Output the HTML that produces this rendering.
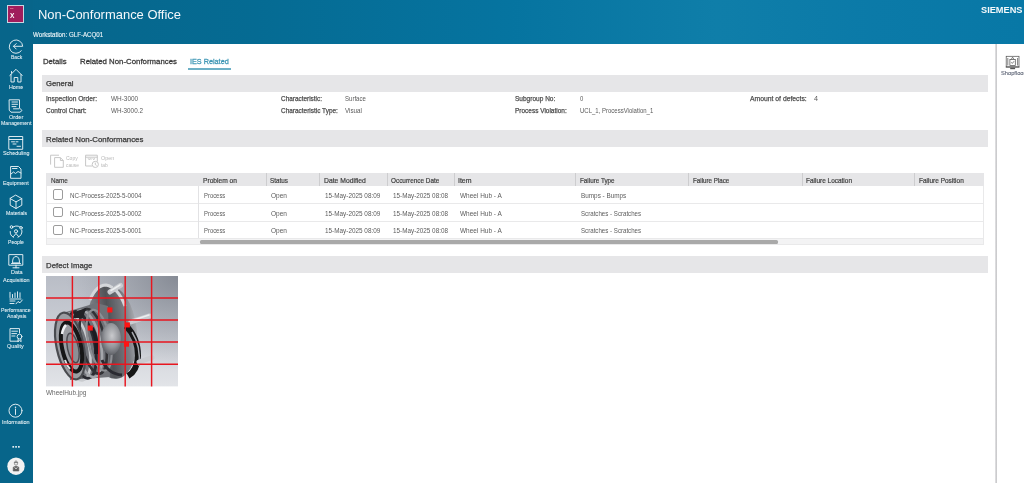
<!DOCTYPE html><html><head><meta charset="utf-8"><style>
html,body{margin:0;padding:0;width:1024px;height:483px;overflow:hidden;background:#fff}
body{position:relative;font-family:"Liberation Sans", sans-serif}
#wrap{position:absolute;left:0;top:0;width:1024px;height:483px;overflow:hidden;filter:blur(0.3px)}
.t{position:absolute;white-space:nowrap}
.r{position:absolute}
svg{position:absolute;overflow:visible}
</style></head><body>
<div id="wrap">
<div class="r" style="left:0px;top:0px;width:1024px;height:43.6px;background:linear-gradient(90deg,#07658a 0%,#056b93 25%,#0674a0 50%,#0f7ea9 70%,#0b7aa8 85%,#0878a6 100%);"></div>
<div class="r" style="left:0px;top:0px;width:33px;height:483px;background:#07658a;"></div>
<div class="r" style="left:33px;top:43.6px;width:991px;height:440px;background:#ffffff;"></div>
<div class="r" style="left:7.1px;top:5.1px;width:17.3px;height:17.5px;background:#a01d5c;border:0.7px solid #c9d6e0;box-sizing:border-box"></div>
<div id="t0" class="t" style="left:9.5px;top:12.00px;font-size:7.8px;line-height:7.8px;color:#fff;font-weight:700;transform:scaleX(0.8456);transform-origin:0 0;">X</div>
<div id="t1" class="t" style="left:9.5px;top:8.17px;font-size:2.4px;line-height:2.4px;color:#f0a0a8;font-weight:700;transform:scaleX(1.0715);transform-origin:0 0;">NC</div>
<div id="t2" class="t" style="left:38px;top:8.41px;font-size:13.1px;line-height:13.1px;color:#f4f8fb;font-weight:400;transform:scaleX(0.9890);transform-origin:0 0;">Non-Conformance Office</div>
<div id="t3" class="t" style="left:33.3px;top:32.01px;font-size:6.6px;line-height:6.6px;color:#eef5f8;font-weight:400;-webkit-text-stroke:0.12px #eef5f8;transform:scaleX(0.9360);transform-origin:0 0;">Workstation: GLF-ACQ01</div>
<div id="t4" class="t" style="left:981.4px;top:5.62px;font-size:8.6px;line-height:8.6px;color:#f5f9fb;font-weight:700;transform:scaleX(1.0727);transform-origin:0 0;">SIEMENS</div>
<div class="r" style="left:994.9px;top:43.6px;width:2.4px;height:440px;background:linear-gradient(90deg,#e6e6e8,#c9c9cb 70%,#d8d8da);"></div>
<div id="t5" class="t" style="left:42.9px;top:57.94px;font-size:8.1px;line-height:8.1px;color:#3c3c3c;font-weight:400;-webkit-text-stroke:0.3px #3c3c3c;transform:scaleX(0.9535);transform-origin:0 0;">Details</div>
<div id="t6" class="t" style="left:79.8px;top:57.94px;font-size:8.1px;line-height:8.1px;color:#3c3c3c;font-weight:400;-webkit-text-stroke:0.3px #3c3c3c;transform:scaleX(0.9658);transform-origin:0 0;">Related Non-Conformances</div>
<div id="t7" class="t" style="left:190px;top:57.94px;font-size:8.1px;line-height:8.1px;color:#3f97b5;font-weight:400;-webkit-text-stroke:0.3px #3f97b5;transform:scaleX(0.8958);transform-origin:0 0;">IES Related</div>
<div class="r" style="left:188.3px;top:68.4px;width:42.6px;height:1.7px;background:#6cb0c6;"></div>
<div class="r" style="left:41.8px;top:75px;width:946.2px;height:16.799999999999997px;background:#e6e6e8;"></div>
<div id="t8" class="t" style="left:46.1px;top:79.77px;font-size:7.6px;line-height:7.6px;color:#383838;font-weight:400;-webkit-text-stroke:0.25px #383838;transform:scaleX(1.0136);transform-origin:0 0;">General</div>
<div class="r" style="left:41.8px;top:130px;width:946.2px;height:17.19999999999999px;background:#e6e6e8;"></div>
<div id="t9" class="t" style="left:46.1px;top:135.87px;font-size:7.6px;line-height:7.6px;color:#383838;font-weight:400;-webkit-text-stroke:0.25px #383838;transform:scaleX(1.0348);transform-origin:0 0;">Related Non-Conformances</div>
<div class="r" style="left:41.8px;top:256.3px;width:946.2px;height:17.19999999999999px;background:#e6e6e8;"></div>
<div id="t10" class="t" style="left:46.1px;top:262.07px;font-size:7.6px;line-height:7.6px;color:#383838;font-weight:400;-webkit-text-stroke:0.25px #383838;transform:scaleX(1.0272);transform-origin:0 0;">Defect Image</div>
<div id="t11" class="t" style="left:46.25px;top:94.87px;font-size:7.0px;line-height:7.0px;color:#4d4d4d;font-weight:400;-webkit-text-stroke:0.25px #4d4d4d;transform:scaleX(0.9506);transform-origin:0 0;">Inspection Order:</div>
<div id="t12" class="t" style="left:110.8px;top:94.87px;font-size:7.0px;line-height:7.0px;color:#5a5a5a;font-weight:400;transform:scaleX(0.9196);transform-origin:0 0;">WH-3000</div>
<div id="t13" class="t" style="left:46.25px;top:107.37px;font-size:7.0px;line-height:7.0px;color:#4d4d4d;font-weight:400;-webkit-text-stroke:0.25px #4d4d4d;transform:scaleX(0.9328);transform-origin:0 0;">Control Chart:</div>
<div id="t14" class="t" style="left:110.8px;top:107.37px;font-size:7.0px;line-height:7.0px;color:#5a5a5a;font-weight:400;transform:scaleX(0.9010);transform-origin:0 0;">WH-3000.2</div>
<div id="t15" class="t" style="left:280.6px;top:94.87px;font-size:7.0px;line-height:7.0px;color:#4d4d4d;font-weight:400;-webkit-text-stroke:0.25px #4d4d4d;transform:scaleX(0.9165);transform-origin:0 0;">Characteristic:</div>
<div id="t16" class="t" style="left:345px;top:94.87px;font-size:7.0px;line-height:7.0px;color:#5a5a5a;font-weight:400;transform:scaleX(0.8622);transform-origin:0 0;">Surface</div>
<div id="t17" class="t" style="left:280.6px;top:107.37px;font-size:7.0px;line-height:7.0px;color:#4d4d4d;font-weight:400;-webkit-text-stroke:0.25px #4d4d4d;transform:scaleX(0.9217);transform-origin:0 0;">Characteristic Type:</div>
<div id="t18" class="t" style="left:345px;top:107.37px;font-size:7.0px;line-height:7.0px;color:#5a5a5a;font-weight:400;transform:scaleX(0.8917);transform-origin:0 0;">Visual</div>
<div id="t19" class="t" style="left:515.2px;top:94.87px;font-size:7.0px;line-height:7.0px;color:#4d4d4d;font-weight:400;-webkit-text-stroke:0.25px #4d4d4d;transform:scaleX(0.9328);transform-origin:0 0;">Subgroup No:</div>
<div id="t20" class="t" style="left:579.7px;top:94.87px;font-size:7.0px;line-height:7.0px;color:#5a5a5a;font-weight:400;transform:scaleX(0.8448);transform-origin:0 0;">0</div>
<div id="t21" class="t" style="left:515.2px;top:107.37px;font-size:7.0px;line-height:7.0px;color:#4d4d4d;font-weight:400;-webkit-text-stroke:0.25px #4d4d4d;transform:scaleX(0.9248);transform-origin:0 0;">Process Violation:</div>
<div id="t22" class="t" style="left:579.7px;top:107.37px;font-size:7.0px;line-height:7.0px;color:#5a5a5a;font-weight:400;transform:scaleX(0.8575);transform-origin:0 0;">UCL_1, ProcessViolation_1</div>
<div id="t23" class="t" style="left:749.7px;top:94.87px;font-size:7.0px;line-height:7.0px;color:#4d4d4d;font-weight:400;-webkit-text-stroke:0.25px #4d4d4d;transform:scaleX(0.9713);transform-origin:0 0;">Amount of defects:</div>
<div id="t24" class="t" style="left:814px;top:94.87px;font-size:7.0px;line-height:7.0px;color:#5a5a5a;font-weight:400;transform:scaleX(1.0240);transform-origin:0 0;">4</div>
<svg style="left:0;top:0" width="1024" height="483" viewBox="0 0 1024 483">
<g fill="none" stroke="#c4c4c4" stroke-width="0.95" stroke-linejoin="round">
 <path d="M50.6 164.6 V155.2 H59"/>
 <path d="M54.6 157.6 H60.4 L63.3 160.5 V167.3 H54.6 Z"/>
 <path d="M60.4 157.6 V160.5 H63.3"/>
 <path d="M85.6 155.2 H97.3 V161.5 M92 166 H85.6 V155.2"/>
 <path d="M85.6 157.2 H97.3"/>
 <path d="M88 158.2 l1.2 1.6 l1 -1.6 M91 158.2 v1.6 M92.8 158.2 l1 1.6 l1 -1.6"/>
 <circle cx="95.3" cy="164.4" r="3.1"/>
 <path d="M95.3 162.6 V164.6 L96.6 165.4"/>
</g></svg>
<div id="t25" class="t" style="left:65.5px;top:156.41px;font-size:5.3px;line-height:5.3px;color:#b8b8b8;font-weight:400;transform:scaleX(0.9455);transform-origin:0 0;">Copy</div>
<div id="t26" class="t" style="left:65.7px;top:163.31px;font-size:5.3px;line-height:5.3px;color:#b8b8b8;font-weight:400;transform:scaleX(0.9123);transform-origin:0 0;">cause</div>
<div id="t27" class="t" style="left:100.9px;top:156.41px;font-size:5.3px;line-height:5.3px;color:#b8b8b8;font-weight:400;transform:scaleX(1.0178);transform-origin:0 0;">Open</div>
<div id="t28" class="t" style="left:101.25px;top:163.31px;font-size:5.3px;line-height:5.3px;color:#b8b8b8;font-weight:400;transform:scaleX(0.9288);transform-origin:0 0;">tab</div>
<div class="r" style="left:46.3px;top:173px;width:937.7px;height:13px;background:#e6e6e8;"></div>
<div class="r" style="left:46.3px;top:186px;width:937.7px;height:59.2px;background:#fff;border:0.8px solid #e9e9ea;border-top:none;box-sizing:border-box"></div>
<div class="r" style="left:47.099999999999994px;top:238.4px;width:936.1px;height:6px;background:#f3f3f4;"></div>
<div class="r" style="left:46.3px;top:203.3px;width:937.7px;height:0.8px;background:#e9e9ea;"></div>
<div class="r" style="left:46.3px;top:220.9px;width:937.7px;height:0.8px;background:#e9e9ea;"></div>
<div class="r" style="left:46.3px;top:238.0px;width:937.7px;height:0.8px;background:#e9e9ea;"></div>
<div class="r" style="left:265.7px;top:173px;width:0.8px;height:13px;background:#cdcdcf;"></div>
<div class="r" style="left:318.5px;top:173px;width:0.8px;height:13px;background:#cdcdcf;"></div>
<div class="r" style="left:386.8px;top:173px;width:0.8px;height:13px;background:#cdcdcf;"></div>
<div class="r" style="left:453.9px;top:173px;width:0.8px;height:13px;background:#cdcdcf;"></div>
<div class="r" style="left:574.9px;top:173px;width:0.8px;height:13px;background:#cdcdcf;"></div>
<div class="r" style="left:688.2px;top:173px;width:0.8px;height:13px;background:#cdcdcf;"></div>
<div class="r" style="left:801.6px;top:173px;width:0.8px;height:13px;background:#cdcdcf;"></div>
<div class="r" style="left:914.4px;top:173px;width:0.8px;height:13px;background:#cdcdcf;"></div>
<div class="r" style="left:197.7px;top:186px;width:0.9px;height:52px;background:#e2e2e4;"></div>
<div id="t29" class="t" style="left:51.2px;top:177.27px;font-size:7.0px;line-height:7.0px;color:#3e3e3e;font-weight:400;-webkit-text-stroke:0.2px #3e3e3e;transform:scaleX(0.9043);transform-origin:0 0;">Name</div>
<div id="t30" class="t" style="left:202.9px;top:177.27px;font-size:7.0px;line-height:7.0px;color:#3e3e3e;font-weight:400;-webkit-text-stroke:0.2px #3e3e3e;transform:scaleX(0.9498);transform-origin:0 0;">Problem on</div>
<div id="t31" class="t" style="left:270.3px;top:177.27px;font-size:7.0px;line-height:7.0px;color:#3e3e3e;font-weight:400;-webkit-text-stroke:0.2px #3e3e3e;transform:scaleX(0.9013);transform-origin:0 0;">Status</div>
<div id="t32" class="t" style="left:324.1px;top:177.27px;font-size:7.0px;line-height:7.0px;color:#3e3e3e;font-weight:400;-webkit-text-stroke:0.2px #3e3e3e;transform:scaleX(0.9698);transform-origin:0 0;">Date Modified</div>
<div id="t33" class="t" style="left:391.2px;top:177.27px;font-size:7.0px;line-height:7.0px;color:#3e3e3e;font-weight:400;-webkit-text-stroke:0.2px #3e3e3e;transform:scaleX(0.9127);transform-origin:0 0;">Occurrence Date</div>
<div id="t34" class="t" style="left:458.3px;top:177.27px;font-size:7.0px;line-height:7.0px;color:#3e3e3e;font-weight:400;-webkit-text-stroke:0.2px #3e3e3e;transform:scaleX(0.9908);transform-origin:0 0;">Item</div>
<div id="t35" class="t" style="left:579.9px;top:177.27px;font-size:7.0px;line-height:7.0px;color:#3e3e3e;font-weight:400;-webkit-text-stroke:0.2px #3e3e3e;transform:scaleX(0.9013);transform-origin:0 0;">Failure Type</div>
<div id="t36" class="t" style="left:692.6px;top:177.27px;font-size:7.0px;line-height:7.0px;color:#3e3e3e;font-weight:400;-webkit-text-stroke:0.2px #3e3e3e;transform:scaleX(0.8884);transform-origin:0 0;">Failure Place</div>
<div id="t37" class="t" style="left:806px;top:177.27px;font-size:7.0px;line-height:7.0px;color:#3e3e3e;font-weight:400;-webkit-text-stroke:0.2px #3e3e3e;transform:scaleX(0.9235);transform-origin:0 0;">Failure Location</div>
<div id="t38" class="t" style="left:918.8px;top:177.27px;font-size:7.0px;line-height:7.0px;color:#3e3e3e;font-weight:400;-webkit-text-stroke:0.2px #3e3e3e;transform:scaleX(0.9285);transform-origin:0 0;">Failure Position</div>
<div class="r" style="left:52.6px;top:189.3px;width:10.2px;height:10.4px;background:#fff;border:1.2px solid #9c9c9c;border-radius:2px;box-sizing:border-box"></div>
<div id="t39" class="t" style="left:69.5px;top:192.07px;font-size:7.0px;line-height:7.0px;color:#5c5c5c;font-weight:400;transform:scaleX(0.8964);transform-origin:0 0;">NC-Process-2025-5-0004</div>
<div id="t40" class="t" style="left:203.9px;top:192.07px;font-size:7.0px;line-height:7.0px;color:#5c5c5c;font-weight:400;transform:scaleX(0.8420);transform-origin:0 0;">Process</div>
<div id="t41" class="t" style="left:271px;top:192.07px;font-size:7.0px;line-height:7.0px;color:#5c5c5c;font-weight:400;transform:scaleX(0.9343);transform-origin:0 0;">Open</div>
<div id="t42" class="t" style="left:325.4px;top:192.07px;font-size:7.0px;line-height:7.0px;color:#5c5c5c;font-weight:400;transform:scaleX(0.9108);transform-origin:0 0;">15-May-2025 08:09</div>
<div id="t43" class="t" style="left:392.7px;top:192.07px;font-size:7.0px;line-height:7.0px;color:#5c5c5c;font-weight:400;transform:scaleX(0.9058);transform-origin:0 0;">15-May-2025 08:08</div>
<div id="t44" class="t" style="left:459.7px;top:192.07px;font-size:7.0px;line-height:7.0px;color:#5c5c5c;font-weight:400;transform:scaleX(0.9238);transform-origin:0 0;">Wheel Hub - A</div>
<div id="t45" class="t" style="left:580.7px;top:192.07px;font-size:7.0px;line-height:7.0px;color:#5c5c5c;font-weight:400;transform:scaleX(0.9097);transform-origin:0 0;">Bumps - Bumps</div>
<div class="r" style="left:52.6px;top:207.05px;width:10.2px;height:10.4px;background:#fff;border:1.2px solid #9c9c9c;border-radius:2px;box-sizing:border-box"></div>
<div id="t46" class="t" style="left:69.5px;top:209.67px;font-size:7.0px;line-height:7.0px;color:#5c5c5c;font-weight:400;transform:scaleX(0.8964);transform-origin:0 0;">NC-Process-2025-5-0002</div>
<div id="t47" class="t" style="left:203.9px;top:209.67px;font-size:7.0px;line-height:7.0px;color:#5c5c5c;font-weight:400;transform:scaleX(0.8420);transform-origin:0 0;">Process</div>
<div id="t48" class="t" style="left:271px;top:209.67px;font-size:7.0px;line-height:7.0px;color:#5c5c5c;font-weight:400;transform:scaleX(0.9343);transform-origin:0 0;">Open</div>
<div id="t49" class="t" style="left:325.4px;top:209.67px;font-size:7.0px;line-height:7.0px;color:#5c5c5c;font-weight:400;transform:scaleX(0.9108);transform-origin:0 0;">15-May-2025 08:09</div>
<div id="t50" class="t" style="left:392.7px;top:209.67px;font-size:7.0px;line-height:7.0px;color:#5c5c5c;font-weight:400;transform:scaleX(0.9058);transform-origin:0 0;">15-May-2025 08:08</div>
<div id="t51" class="t" style="left:459.7px;top:209.67px;font-size:7.0px;line-height:7.0px;color:#5c5c5c;font-weight:400;transform:scaleX(0.9238);transform-origin:0 0;">Wheel Hub - A</div>
<div id="t52" class="t" style="left:580.7px;top:209.67px;font-size:7.0px;line-height:7.0px;color:#5c5c5c;font-weight:400;transform:scaleX(0.8778);transform-origin:0 0;">Scratches - Scratches</div>
<div class="r" style="left:52.6px;top:224.8px;width:10.2px;height:10.4px;background:#fff;border:1.2px solid #9c9c9c;border-radius:2px;box-sizing:border-box"></div>
<div id="t53" class="t" style="left:69.5px;top:227.27px;font-size:7.0px;line-height:7.0px;color:#5c5c5c;font-weight:400;transform:scaleX(0.8964);transform-origin:0 0;">NC-Process-2025-5-0001</div>
<div id="t54" class="t" style="left:203.9px;top:227.27px;font-size:7.0px;line-height:7.0px;color:#5c5c5c;font-weight:400;transform:scaleX(0.8420);transform-origin:0 0;">Process</div>
<div id="t55" class="t" style="left:271px;top:227.27px;font-size:7.0px;line-height:7.0px;color:#5c5c5c;font-weight:400;transform:scaleX(0.9343);transform-origin:0 0;">Open</div>
<div id="t56" class="t" style="left:325.4px;top:227.27px;font-size:7.0px;line-height:7.0px;color:#5c5c5c;font-weight:400;transform:scaleX(0.9108);transform-origin:0 0;">15-May-2025 08:09</div>
<div id="t57" class="t" style="left:392.7px;top:227.27px;font-size:7.0px;line-height:7.0px;color:#5c5c5c;font-weight:400;transform:scaleX(0.9058);transform-origin:0 0;">15-May-2025 08:08</div>
<div id="t58" class="t" style="left:459.7px;top:227.27px;font-size:7.0px;line-height:7.0px;color:#5c5c5c;font-weight:400;transform:scaleX(0.9238);transform-origin:0 0;">Wheel Hub - A</div>
<div id="t59" class="t" style="left:580.7px;top:227.27px;font-size:7.0px;line-height:7.0px;color:#5c5c5c;font-weight:400;transform:scaleX(0.8778);transform-origin:0 0;">Scratches - Scratches</div>
<div class="r" style="left:200px;top:240.3px;width:578.3px;height:3.5px;background:#a9a9a9;border-radius:1.5px"></div>
<svg style="left:46.1px;top:275.8px" width="132" height="110.4" viewBox="0 0 132 110.4" preserveAspectRatio="none">
<defs>
<linearGradient id="bgv" x1="0" y1="0" x2="0" y2="1"><stop offset="0" stop-color="#b9bdc6"/><stop offset="0.55" stop-color="#cdd0d7"/><stop offset="1" stop-color="#e2e4e8"/></linearGradient>
<radialGradient id="bgr" cx="1" cy="0" r="0.85"><stop offset="0" stop-color="#868b95" stop-opacity="1"/><stop offset="1" stop-color="#8f939c" stop-opacity="0"/></radialGradient>
<linearGradient id="body" x1="0" y1="0" x2="1" y2="0"><stop offset="0" stop-color="#9a9ca2"/><stop offset="0.5" stop-color="#6d6f75"/><stop offset="1" stop-color="#4a4b50"/></linearGradient>
<linearGradient id="fl" x1="0" y1="0" x2="1" y2="0"><stop offset="0" stop-color="#8e9096"/><stop offset="0.45" stop-color="#505257"/><stop offset="0.8" stop-color="#7c7e84"/><stop offset="1" stop-color="#acaeb3"/></linearGradient>
<radialGradient id="boss" cx="0.55" cy="0.4" r="0.6"><stop offset="0" stop-color="#c9cacd"/><stop offset="0.6" stop-color="#94969b"/><stop offset="1" stop-color="#606268"/></radialGradient>
<filter id="bl" x="-10%" y="-10%" width="120%" height="120%"><feGaussianBlur stdDeviation="0.7"/></filter>
</defs>
<rect width="132" height="110.4" fill="url(#bgv)"/>
<rect width="132" height="110.4" fill="url(#bgr)"/>
<g filter="url(#bl)">
<ellipse cx="66" cy="56" rx="25" ry="47" transform="rotate(-6 66 56)" fill="url(#fl)"/>
<path d="M44 24 Q50 9 60 9 Q72 11 79 30" fill="none" stroke="#d4d6da" stroke-width="3"/>
<path d="M80 50 Q92 62 92 80 Q91 95 82 100" fill="none" stroke="#141518" stroke-width="6"/>
<path d="M86 56 Q95 70 93 90" fill="none" stroke="#a5a7ac" stroke-width="1.5"/>
<path d="M20 36 L50 27 L62 30 L64 101 L24 104 Z" fill="#707278"/>
<g fill="none" transform="rotate(-12 40 70)">
<ellipse cx="30" cy="69" rx="13" ry="34" stroke="#c9cbcf" stroke-width="2.6"/>
<ellipse cx="36" cy="68" rx="13" ry="34" stroke="#2a2b30" stroke-width="3"/>
<ellipse cx="42" cy="68" rx="13" ry="34" stroke="#a4a6ab" stroke-width="2.6"/>
<ellipse cx="48" cy="67" rx="12" ry="33" stroke="#303136" stroke-width="2.6"/>
<ellipse cx="54" cy="67" rx="11" ry="31" stroke="#8d8f94" stroke-width="2.2"/>
</g>
<ellipse cx="65" cy="63" rx="10" ry="16" fill="url(#boss)"/>
<path d="M46 52 Q52 62 50 78" fill="none" stroke="#1e1f23" stroke-width="4"/>
<path d="M28 36 L40 32 L37 42 L27 42 Z" fill="#222327"/>
<path d="M56 84 Q62 98 76 99" fill="none" stroke="#2a2b30" stroke-width="3"/>
<ellipse cx="24" cy="70" rx="13.5" ry="34" transform="rotate(-12 24 70)" fill="#9b9da2" stroke="#4a4b50" stroke-width="2.2"/>
<ellipse cx="25.5" cy="71" rx="9.5" ry="25" transform="rotate(-12 25.5 71)" fill="none" stroke="#141518" stroke-width="4"/>
<path d="M16 58 Q17 52 20 49" fill="none" stroke="#f0f1f3" stroke-width="2.5"/><path d="M19 84 Q21 90 24 93" fill="none" stroke="#e0e1e4" stroke-width="2"/>
<ellipse cx="27" cy="72" rx="5.5" ry="15" transform="rotate(-12 27 72)" fill="#8d8f95" stroke="#4b4c51" stroke-width="1.5"/>
<g stroke="#c9cbd0" stroke-width="5" stroke-linecap="round">
<path d="M64 16 L74.5 9.5"/>
<path d="M85 46 L103.5 40"/>
<path d="M93 86 L106 81.5"/>
</g>
<g stroke="#eceef0" stroke-width="1.5" stroke-linecap="round">
<path d="M65 14.5 L74 9"/><path d="M86 44.5 L103 39"/>
</g>
</g>
<g stroke="#e8161f" stroke-width="1.45">
<path d="M26.4 0 V110.4 M52.8 0 V110.4 M79.2 0 V110.4 M105.6 0 V110.4"/>
<path d="M0 22.1 H132 M0 44.1 H132 M0 66.1 H132 M0 88.3 H132"/>
</g>
<g fill="#ff1414">
<rect x="61.3" y="31.4" width="5.1" height="5.1"/>
<rect x="41.7" y="49.5" width="5.1" height="5.1"/>
<rect x="78.9" y="46.4" width="5" height="5.1"/>
<rect x="77.9" y="65.6" width="5.1" height="5.1"/>
</g></svg>
<div id="t60" class="t" style="left:46.1px;top:389.96px;font-size:6.9px;line-height:6.9px;color:#666;font-weight:400;transform:scaleX(0.9331);transform-origin:0 0;">WheelHub.jpg</div>
<svg style="left:0;top:0" width="1024" height="483" viewBox="0 0 1024 483">
<g fill="none" stroke="#555" stroke-width="0.75">
<rect x="1006.2" y="56.3" width="12.8" height="10.6"/>
<path d="M1007.8 58 V65.5 M1017.6 58 V65.5"/>
<rect x="1009.9" y="59.4" width="5.4" height="6"/>
<path d="M1011.2 59.4 L1012.6 57.2 L1014 59.4"/>
<path d="M1011.3 62.3 l1 1.1 l1.8 -2.2"/>
</g>
<rect x="1005.8" y="66.6" width="13.6" height="0.9" fill="#444"/>
<rect x="1010.2" y="67.7" width="4.9" height="1.5" fill="#555"/>
</svg>
<div id="t61" class="t" style="left:1001.1px;top:71.41px;font-size:5.3px;line-height:5.3px;color:#5f6677;font-weight:400;-webkit-text-stroke:0.1px #5f6677;transform:scaleX(1.0755);transform-origin:0 0;">Shopfloor</div>
<div id="t62" class="t" style="left:10.5px;top:55.00px;font-size:5.2px;line-height:5.2px;color:#e9f2f6;font-weight:400;-webkit-text-stroke:0.06px #e9f2f6;transform:scaleX(0.9700);transform-origin:0 0;">Back</div>
<div id="t63" class="t" style="left:8.7px;top:84.50px;font-size:5.2px;line-height:5.2px;color:#e9f2f6;font-weight:400;-webkit-text-stroke:0.06px #e9f2f6;transform:scaleX(1.0330);transform-origin:0 0;">Home</div>
<div id="t64" class="t" style="left:8.7px;top:114.80px;font-size:5.2px;line-height:5.2px;color:#e9f2f6;font-weight:400;-webkit-text-stroke:0.06px #e9f2f6;transform:scaleX(1.0780);transform-origin:0 0;">Order</div>
<div id="t65" class="t" style="left:0.6px;top:121.00px;font-size:5.2px;line-height:5.2px;color:#e9f2f6;font-weight:400;-webkit-text-stroke:0.06px #e9f2f6;transform:scaleX(1.0039);transform-origin:0 0;">Management</div>
<div id="t66" class="t" style="left:2.7px;top:151.20px;font-size:5.2px;line-height:5.2px;color:#e9f2f6;font-weight:400;-webkit-text-stroke:0.06px #e9f2f6;transform:scaleX(1.0323);transform-origin:0 0;">Scheduling</div>
<div id="t67" class="t" style="left:3.1px;top:180.80px;font-size:5.2px;line-height:5.2px;color:#e9f2f6;font-weight:400;-webkit-text-stroke:0.06px #e9f2f6;transform:scaleX(1.0358);transform-origin:0 0;">Equipment</div>
<div id="t68" class="t" style="left:5.6px;top:211.00px;font-size:5.2px;line-height:5.2px;color:#e9f2f6;font-weight:400;-webkit-text-stroke:0.06px #e9f2f6;transform:scaleX(1.0025);transform-origin:0 0;">Materials</div>
<div id="t69" class="t" style="left:8px;top:239.80px;font-size:5.2px;line-height:5.2px;color:#e9f2f6;font-weight:400;-webkit-text-stroke:0.06px #e9f2f6;transform:scaleX(0.9779);transform-origin:0 0;">People</div>
<div id="t70" class="t" style="left:10.5px;top:270.40px;font-size:5.2px;line-height:5.2px;color:#e9f2f6;font-weight:400;-webkit-text-stroke:0.06px #e9f2f6;transform:scaleX(1.0484);transform-origin:0 0;">Data</div>
<div id="t71" class="t" style="left:2.5px;top:278.00px;font-size:5.2px;line-height:5.2px;color:#e9f2f6;font-weight:400;-webkit-text-stroke:0.06px #e9f2f6;transform:scaleX(1.0640);transform-origin:0 0;">Acquisition</div>
<div id="t72" class="t" style="left:1.2px;top:307.60px;font-size:5.2px;line-height:5.2px;color:#e9f2f6;font-weight:400;-webkit-text-stroke:0.06px #e9f2f6;transform:scaleX(0.9932);transform-origin:0 0;">Performance</div>
<div id="t73" class="t" style="left:6.5px;top:314.20px;font-size:5.2px;line-height:5.2px;color:#e9f2f6;font-weight:400;-webkit-text-stroke:0.06px #e9f2f6;transform:scaleX(1.0089);transform-origin:0 0;">Analysis</div>
<div id="t74" class="t" style="left:7.2px;top:343.60px;font-size:5.2px;line-height:5.2px;color:#e9f2f6;font-weight:400;-webkit-text-stroke:0.06px #e9f2f6;transform:scaleX(1.0337);transform-origin:0 0;">Quality</div>
<div id="t75" class="t" style="left:2.2px;top:419.50px;font-size:5.2px;line-height:5.2px;color:#e9f2f6;font-weight:400;-webkit-text-stroke:0.06px #e9f2f6;transform:scaleX(1.0635);transform-origin:0 0;">Information</div>
<svg style="left:0;top:0" width="33" height="483" viewBox="0 0 33 483">
<g fill="none" stroke="#e6f0f4" stroke-width="0.95" stroke-linecap="round" stroke-linejoin="round">
 <!-- back -->
 <path d="M21.3 50.8 A6.7 6.7 0 1 1 22.7 46.3 H13.5"/>
 <path d="M16.2 43.6 L13.5 46.3 L16.2 49"/>
 <!-- home -->
 <path d="M9.8 75.5 L16 69.3 L22.2 75.5"/>
 <path d="M11 74.5 V82 H14.2 V77.5 H17.8 V82 H21 V74.5"/>
 <path d="M11.5 71.5 V73"/>
 <!-- order -->
 <path d="M9.5 99.8 H19.5 V108 L22 110.5 L20 112.2 H11 L9.5 110.5 Z"/>
 <path d="M12 102 H17.5 M12 104.3 H17.5 M12 106.6 H16 M13.5 108.8 H19"/>
 <!-- scheduling -->
 <rect x="9.2" y="136.5" width="13.5" height="12.8"/>
 <path d="M9.2 139.5 H22.7"/>
 <path d="M11.5 141.8 h3 M16 141.8 h2 M13 144 h3 M17 146.3 h3.5"/>
 <!-- equipment -->
 <path d="M11 166.5 H18.5 L21 169 V178.3 H11 Z"/>
 <path d="M11 174 L13.5 172 L15.5 173.5 L18 171.5 L21 173"/>
 <path d="M12.5 168.5 H17"/>
 <!-- materials cube -->
 <path d="M16 195.3 L21.8 198.6 V205.2 L16 208.5 L10.2 205.2 V198.6 Z"/>
 <path d="M10.2 198.6 L16 201.9 L21.8 198.6 M16 201.9 V208.5"/>
 <!-- people -->
 <path d="M12 228 A5.8 5.8 0 0 1 20 227"/>
 <path d="M21.8 230 A5.8 5.8 0 0 1 18 237.2"/>
 <path d="M13.5 237.3 A5.8 5.8 0 0 1 10.2 231.5"/>
 <circle cx="16" cy="231.3" r="1.6"/>
 <circle cx="11.5" cy="227" r="1.3"/>
 <circle cx="21" cy="227.8" r="1.3"/>
 <path d="M13.5 236.5 L16 233.5 L18.5 236.5"/>
 <!-- data acquisition monitor -->
 <rect x="9.2" y="254.6" width="13.6" height="10.6"/>
 <path d="M13 267.8 H19 M16 265.2 V267.8"/>
 <path d="M12.5 262.5 Q12.5 256.5 16 256.5 Q19.5 256.5 19.5 262.5 Z"/>
 <path d="M11.5 263.5 H20.5"/>
 <!-- performance -->
 <path d="M10 292.3 V297.5 M12.5 294.5 V297.5 M15 293 V297.5 M17.5 291.8 V297.5 M20 292.8 V297.5"/>
 <path d="M9.8 299 H21"/>
 <path d="M10 301 H15 M10 303.5 H14"/>
 <path d="M16 303.8 L18 301.5 L20 302.8 L22.3 300"/>
 <!-- quality -->
 <path d="M18.5 341.2 H10 V328.6 H19.5 V333"/>
 <path d="M11.8 331.2 H17.5 M11.8 333.6 H16.5 M11.8 336 H15"/>
 <circle cx="19.5" cy="336.6" r="2.4"/>
 <path d="M18.3 338.8 L17.8 341.6 L19.5 340.6 L21.2 341.6 L20.7 338.8"/>
 <!-- info -->
 <circle cx="15.5" cy="410.7" r="6.5"/>
 <path d="M15.5 409 V414.5"/>
</g>
<circle cx="15.5" cy="407.2" r="0.75" fill="#e6f0f4"/>
<g fill="#e3edf2"><rect x="12.4" y="446" width="1.7" height="1.7"/><rect x="15.2" y="446" width="1.7" height="1.7"/><rect x="18" y="446" width="1.7" height="1.7"/></g>
<circle cx="16" cy="466.2" r="8.7" fill="#f2f2f2"/>
<g fill="#5e5e5e" stroke="#5e5e5e" stroke-width="0.6">
 <path d="M14.2 462.6 Q16 459 17.8 462.6 Z" fill="none"/>
 <circle cx="16" cy="463.6" r="1.6" fill="none"/>
 <path d="M13.2 471 V467.2 Q16 465.4 18.8 467.2 V471 Z"/>
</g>
<path d="M14.6 467.3 L16 469 L17.4 467.3" fill="none" stroke="#f2f2f2" stroke-width="0.7"/>
</svg>
</div>
</body></html>
